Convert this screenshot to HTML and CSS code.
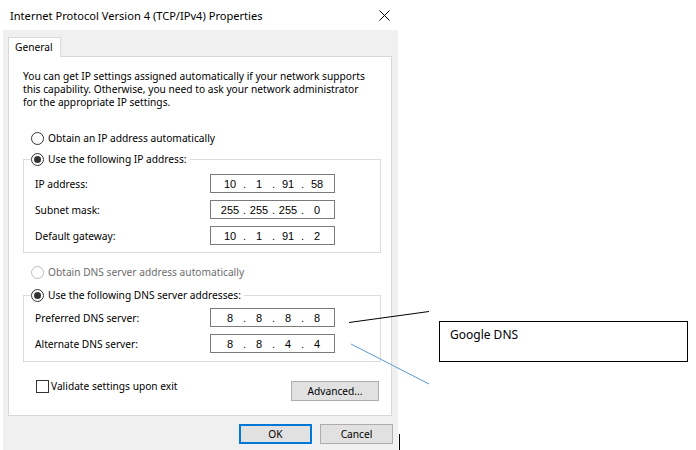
FILE: index.html
```html
<!DOCTYPE html>
<html>
<head>
<meta charset="utf-8">
<link rel="stylesheet" href="styles.css">
</head>
<body>
<div class="window">
  <div class="titlebar">
    <span class="title">Internet Protocol Version 4 (TCP/IPv4) Properties</span>
    <svg class="close" viewBox="0 0 11 11"><path d="M0.5 0.5 L10.5 10.5 M10.5 0.5 L0.5 10.5" stroke="#000" stroke-width="1" fill="none"/></svg>
  </div>
  <div class="client">
    <div class="tabs"><div class="tab">General</div></div>
    <div class="panel">
      <p class="intro">You can get IP settings assigned automatically if your network supports<br>this capability. Otherwise, you need to ask your network administrator<br>for the appropriate IP settings.</p>
      <div class="opt first"><span class="radio"></span>Obtain an IP address automatically</div>
      <div class="group g1">
        <div class="legend"><span class="radio on"></span>Use the following IP address:</div>
        <div class="field f-first"><span class="label">IP address:</span><div class="ip"><span class="seg">10</span><span class="dot">.</span><span class="seg">1</span><span class="dot">.</span><span class="seg">91</span><span class="dot">.</span><span class="seg">58</span></div></div>
        <div class="field"><span class="label">Subnet mask:</span><div class="ip"><span class="seg">255</span><span class="dot">.</span><span class="seg">255</span><span class="dot">.</span><span class="seg">255</span><span class="dot">.</span><span class="seg">0</span></div></div>
        <div class="field"><span class="label">Default gateway:</span><div class="ip"><span class="seg">10</span><span class="dot">.</span><span class="seg">1</span><span class="dot">.</span><span class="seg">91</span><span class="dot">.</span><span class="seg">2</span></div></div>
      </div>
      <div class="opt disabled"><span class="radio"></span>Obtain DNS server address automatically</div>
      <div class="group g2">
        <div class="legend"><span class="radio on"></span>Use the following DNS server addresses:</div>
        <div class="field f-first"><span class="label">Preferred DNS server:</span><div class="ip"><span class="seg">8</span><span class="dot">.</span><span class="seg">8</span><span class="dot">.</span><span class="seg">8</span><span class="dot">.</span><span class="seg">8</span></div></div>
        <div class="field"><span class="label">Alternate DNS server:</span><div class="ip"><span class="seg">8</span><span class="dot">.</span><span class="seg">8</span><span class="dot">.</span><span class="seg">4</span><span class="dot">.</span><span class="seg">4</span></div></div>
      </div>
      <div class="bottom-row">
        <span class="check"></span><span class="check-label">Validate settings upon exit</span>
        <button class="btn adv">Advanced...</button>
      </div>
    </div>
    <div class="footer">
      <button class="btn ok">OK</button>
      <button class="btn">Cancel</button>
    </div>
  </div>
</div>
<svg class="overlay" width="696" height="450" viewBox="0 0 696 450">
  <line x1="349" y1="322.5" x2="429" y2="311.5" stroke="#000" stroke-width="1"/>
  <line x1="351" y1="344" x2="429" y2="384" stroke="#5b9bd5" stroke-width="1"/>
  <line x1="399.5" y1="434" x2="399.5" y2="450" stroke="#000" stroke-width="1"/>
</svg>
<div class="note">Google DNS</div>
</body>
</html>
```
FILE: styles.css
```css
* { box-sizing: border-box; }
body {
  margin: 0;
  width: 696px;
  height: 450px;
  background: #fff;
  position: relative;
  overflow: hidden;
  font-family: "Noto Sans", "Open Sans", sans-serif;
  font-size: 10.2px;
  color: #000;
}
.window {
  margin-left: 3px;
  width: 395px;
  height: 450px;
  display: flex;
  flex-direction: column;
}
.titlebar {
  height: 30px;
  flex: none;
  background: #fff;
  display: flex;
  align-items: center;
  justify-content: space-between;
  padding: 0 8px 0 7px;
}
.title { font-size: 11.1px; }
.close { width: 11px; height: 11px; }
.client {
  flex: 1;
  background: #f0f0f0;
  padding: 7px 0 0 5px;
}
.tabs { display: flex; }
.tab {
  width: 53px;
  height: 20px;
  background: #fff;
  border: 1px solid #d9d9d9;
  border-bottom: none;
  margin-bottom: -1px;
  position: relative;
  z-index: 1;
  padding-left: 6px;
  line-height: 18px;
}
.panel {
  width: 384px;
  height: 360px;
  background: #fff;
  border: 1px solid #d9d9d9;
  padding: 0 0 0 14px;
  display: flex;
  flex-direction: column;
}
.intro { margin: 13px 0 0; line-height: 13px; }
.opt {
  display: flex;
  align-items: center;
  height: 14px;
  margin-left: 8px;
}
.opt.first { margin-top: 22px; }
.opt.disabled { margin-top: 12px; color: #6d6d6d; }
.opt.disabled .radio { border-color: #bcbcbc; }
.radio {
  width: 13px;
  height: 13px;
  border-radius: 50%;
  border: 1px solid #333;
  margin-right: 4px;
  background: #fff;
  position: relative;
  flex: none;
}
.radio.on::after {
  content: "";
  position: absolute;
  left: 2px;
  top: 2px;
  width: 7px;
  height: 7px;
  border-radius: 50%;
  background: #333;
}
.group {
  width: 358px;
  border: 1px solid #dcdcdc;
  display: flex;
  flex-direction: column;
}
.g1 { margin-top: 14px; padding-bottom: 7px; }
.g2 { margin-top: 16px; padding-bottom: 8px; }
.legend {
  display: flex;
  align-items: center;
  width: max-content;
  height: 14px;
  margin-top: -8px;
  margin-left: 7px;
  background: #fff;
  padding-right: 3px;
}
.field {
  display: flex;
  align-items: center;
  height: 19px;
  padding-left: 11px;
  margin-top: 7px;
}
.g1 .f-first { margin-top: 8px; }
.g2 .f-first { margin-top: 6px; }
.label { width: 175px; }
.ip {
  width: 125px;
  height: 19px;
  border: 1px solid #7a7a7a;
  display: flex;
  align-items: center;
  padding-left: 7px;
  font-family: "Liberation Sans", sans-serif;
  font-size: 11px;
}
.seg { width: 24px; text-align: center; }
.dot { width: 5px; text-align: center; }
.bottom-row {
  display: flex;
  align-items: flex-start;
  margin-top: 18px;
}
.check {
  width: 13px;
  height: 13px;
  border: 1px solid #333;
  margin-left: 13px;
  flex: none;
}
.check-label { margin-left: 2px; line-height: 13px; }
.btn {
  font-family: inherit;
  font-size: inherit;
  color: #000;
  background: #e1e1e1;
  border: 1px solid #adadad;
  width: 73px;
  height: 20px;
  padding: 0;
  margin: 0;
}
.adv { width: 88px; margin-left: auto; margin-right: 12px; margin-top: 1px; }
.footer {
  display: flex;
  justify-content: flex-end;
  gap: 8px;
  margin-top: 8px;
  padding-right: 5px;
}
.ok { border: 2px solid #0078d7; }
.overlay {
  position: absolute;
  left: 0;
  top: 0;
  pointer-events: none;
}
.note {
  position: absolute;
  left: 439px;
  top: 321px;
  width: 249px;
  height: 41px;
  border: 1px solid #000;
  background: #fff;
  padding: 5px 10px;
  font-size: 12px;
  line-height: 16px;
}
```
